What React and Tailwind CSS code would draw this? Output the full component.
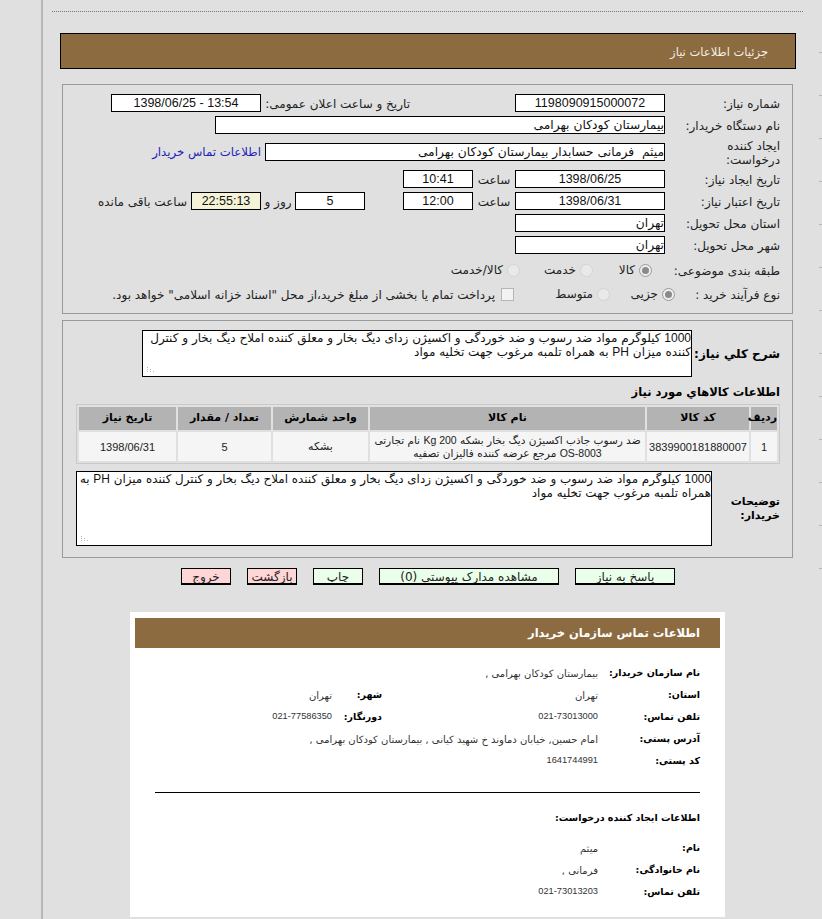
import React from "react";

const N = ({ children }) => <span className="font-['Liberation_Sans',sans-serif]">{children}</span>;

const Desc1 = () => (
  <>
    <N>1000</N> کیلوگرم مواد ضد رسوب و ضد خوردگی و اکسیژن زدای دیگ بخار و معلق کننده املاح دیگ بخار و کنترل کننده میزان <N>PH</N> به همراه تلمبه مرغوب جهت تخلیه مواد
  </>
);

function Box({ w, children, center, yellow, ltr }) {
  return (
    <div className={`${w} h-[18px] shrink-0 border border-black ${yellow ? "bg-[#f5f3d7]" : "bg-white"} ${center ? "text-center" : "text-right"} leading-[17px] text-[#111] whitespace-pre overflow-hidden ${ltr ? "text-[12.5px] font-['Liberation_Sans',sans-serif]" : "text-[12.25px]"}`}>
      {ltr ? <span dir="ltr">{children}</span> : children}
    </div>
  );
}

function Label({ children, w = "w-[115px]" }) {
  return <div className={`${w} shrink-0 pt-[1px] text-[12px] leading-[14px] text-[#222] whitespace-nowrap`}>{children}</div>;
}

function Txt({ className = "", children }) {
  return <div className={`shrink-0 pt-[1px] text-[12px] text-[#222] whitespace-nowrap ${className}`}>{children}</div>;
}

function Row({ children, className = "" }) {
  return <div className={`flex items-center h-[18px] ${className}`}>{children}</div>;
}

function Radio({ on }) {
  return (
    <span className={`w-[13px] h-[13px] shrink-0 rounded-full border flex items-center justify-center ${on ? "border-[#9a9a9a] bg-[#eeeeee]" : "border-[#d4d4d4] bg-[#e9e9e9]"}`}>
      {on && <span className="w-[7px] h-[7px] rounded-full bg-[#8a8a8a]" />}
    </span>
  );
}

function Btn({ w, pink, children }) {
  return (
    <div className={`${w} h-[17px] border border-black border-b-2 ${pink ? "bg-[#ffd6d6]" : "bg-[#eaffea]"} text-center text-[12px] leading-[17px] text-[#222] overflow-hidden`} dir="rtl">
      {children}
    </div>
  );
}

function Info({ label, value, label2, value2, num, num2 }) {
  const v = "text-[10px] text-[#333] whitespace-nowrap";
  const n = "text-[9.25px] text-[#333] whitespace-nowrap font-['Liberation_Sans',sans-serif]";
  return (
    <div className="flex items-center h-[22px]">
      <div className="w-[102px] shrink-0 text-[9.5px] font-bold text-black whitespace-nowrap">{label}</div>
      <div className={`${label2 ? "w-[216px]" : ""} shrink-0 ${num ? n : v}`}>{value}</div>
      {label2 && <div className="w-[50px] shrink-0 text-[9.5px] font-bold text-black">{label2}</div>}
      {label2 && <div className={`shrink-0 ${num2 ? n : v}`}>{value2}</div>}
    </div>
  );
}

function Grip() {
  return (
    <svg className="absolute left-[3px] bottom-[2px]" width="10" height="8" viewBox="0 0 10 8">
      <g fill="#b5b5b5">
        <rect x="1" y="5" width="1" height="1" /><rect x="1" y="3" width="1" height="1" /><rect x="1" y="1" width="1" height="1" />
        <rect x="4" y="5" width="1" height="1" /><rect x="4" y="3" width="1" height="1" />
        <rect x="7" y="5" width="1" height="1" />
      </g>
    </svg>
  );
}

const Th = ({ w, children }) => (
  <th className={`${w} h-[23px] p-0 bg-[#b3b3b3] text-[11px] font-bold text-black text-center whitespace-nowrap`}>{children}</th>
);
const Td = ({ children, num }) => (
  <td className={`h-[29px] p-0 bg-[#f5f5f5] leading-[14px] text-[#222] text-center ${num ? "text-[11px] font-['Liberation_Sans',sans-serif]" : "text-[11px]"}`}>{children}</td>
);

export default function App() {
  return (
    <div className="relative w-[822px] h-[919px] overflow-hidden bg-[#e0e0e0] font-['DejaVu_Sans',sans-serif]">
      <div className="absolute right-0 top-[10px] w-[3px] h-[570px] bg-[repeating-linear-gradient(to_bottom,transparent_0,transparent_42px,#b4b4b4_42px,#b4b4b4_43px)]" />
      <div className="ml-[41px] h-full border-l-2 border-[#b8b8b8]">
        <div className="pt-[11px]">
          <div className="ml-[9px] w-[751px] border-t border-dotted border-[#777]" />
        </div>

        <div dir="rtl" className="ml-[17px] mt-[21px] w-[736px] h-[36px] border border-black bg-[#8b6b3f] pr-[27px] text-[11.5px] leading-[36px] text-[#f4f0e8]">
          جزئیات اطلاعات نیاز
        </div>

        <div dir="rtl" className="ml-[19px] mt-[15px] w-[731px] h-[230px] border border-[#999] pt-[9px] pr-[12px]">
          <Row>
            <Label>شماره نیاز:</Label>
            <Box w="w-[150px]" center ltr>1198090915000072</Box>
            <Txt className="ms-[105px] w-[149px]">تاریخ و ساعت اعلان عمومی:</Txt>
            <Box w="w-[150px]" center ltr>1398/06/25 - 13:54</Box>
          </Row>
          <Row className="mt-[4px]">
            <Label>نام دستگاه خریدار:</Label>
            <Box w="w-[450px]">بیمارستان کودکان بهرامی</Box>
          </Row>
          <Row className="mt-[9px]">
            <Label>ایجاد کننده<br />درخواست:</Label>
            <Box w="w-[400px]">میثم  فرمانی حسابدار بیمارستان کودکان بهرامی</Box>
            <a className="ms-[4px] pt-[1px] text-[11.75px] text-[#2222bb] whitespace-nowrap">اطلاعات تماس خریدار</a>
          </Row>
          <Row className="mt-[9px]">
            <Label>تاریخ ایجاد نیاز:</Label>
            <Box w="w-[150px]" center ltr>1398/06/25</Box>
            <Txt className="w-[42px] text-center">ساعت</Txt>
            <Box w="w-[70px]" center ltr>10:41</Box>
          </Row>
          <Row className="mt-[4px]">
            <Label>تاریخ اعتبار نیاز:</Label>
            <Box w="w-[150px]" center ltr>1398/06/31</Box>
            <Txt className="w-[42px] text-center">ساعت</Txt>
            <Box w="w-[70px]" center ltr>12:00</Box>
            <div className="w-[38px] shrink-0" />
            <Box w="w-[70px]" center ltr>5</Box>
            <Txt className="w-[34px] text-center text-[10px]">روز و</Txt>
            <Box w="w-[70px]" center yellow ltr>22:55:13</Box>
            <Txt className="ms-[4px]">ساعت باقی مانده</Txt>
          </Row>
          <Row className="mt-[4px]">
            <Label>استان محل تحویل:</Label>
            <Box w="w-[150px]">تهران</Box>
          </Row>
          <Row className="mt-[4px]">
            <Label>شهر محل تحویل:</Label>
            <Box w="w-[150px]">تهران</Box>
          </Row>
          <Row className="mt-[7px]">
            <Label>طبقه بندی موضوعی:</Label>
            <div className="ms-[13px] w-[59px] shrink-0 flex items-center gap-[4px] text-[12px] text-[#222]"><Radio on />کالا</div>
            <div className="w-[73px] shrink-0 flex items-center gap-[4px] text-[12px] text-[#222]"><Radio />خدمت</div>
            <div className="flex items-center gap-[4px] text-[12px] text-[#222] whitespace-nowrap"><Radio />کالا/خدمت</div>
          </Row>
          <Row className="mt-[6px]">
            <Label w="w-[105px]">نوع فرآیند خرید :</Label>
            <div className="w-[65px] shrink-0 flex items-center gap-[4px] text-[12px] text-[#222]"><Radio on />جزیی</div>
            <div className="w-[96px] shrink-0 flex items-center gap-[4px] text-[12px] text-[#222]"><Radio />متوسط</div>
            <span className="w-[13px] h-[13px] shrink-0 border border-[#b5b5b5] bg-[#f2f2f2]" />
            <Txt className="ms-[6px] text-[12.25px]">پرداخت تمام یا بخشی از مبلغ خرید،از محل "اسناد خزانه اسلامی" خواهد بود.</Txt>
          </Row>
        </div>

        <div dir="rtl" className="ml-[19px] mt-[6px] w-[731px] h-[238px] border border-[#999] pt-[9px] pr-[12px]">
          <div className="flex items-center">
            <div className="w-[88px] shrink-0 text-[12px] font-bold text-black whitespace-nowrap">شرح کلي نياز:</div>
            <div className="relative w-[550px] h-[47px] shrink-0 border border-black bg-white text-[12px] leading-[14px] text-[#111] overflow-hidden">
              <Desc1 />
              <Grip />
            </div>
          </div>
          <div className="mt-[7px] h-[16px] text-[11.5px] leading-[16px] font-bold text-black">اطلاعات کالاهاي مورد نياز</div>
          <table className="mt-[4px] w-[704px] table-fixed border-separate border-spacing-[2px] border border-[#c9c9c9]">
            <thead>
              <tr>
                <Th w="w-[26px]">رديف</Th>
                <Th w="w-[102px]">کد کالا</Th>
                <Th w="w-[275px]">نام کالا</Th>
                <Th w="w-[95px]">واحد شمارش</Th>
                <Th w="w-[93px]">تعداد / مقدار</Th>
                <Th>تاریخ نیاز</Th>
              </tr>
            </thead>
            <tbody>
              <tr>
                <Td num>1</Td>
                <Td num>3839900181880007</Td>
                <Td>
                  <span className="text-[10.5px] leading-[13px] block whitespace-nowrap">ضد رسوب جاذب اکسیژن دیگ بخار بشکه <N>200 Kg</N> نام تجارتی<br /><N>OS-8003</N> مرجع عرضه کننده فالیزان تصفیه</span>
                </Td>
                <Td>بشکه</Td>
                <Td num>5</Td>
                <Td num>1398/06/31</Td>
              </tr>
            </tbody>
          </table>
          <div className="flex items-center mt-[7px]">
            <div className="w-[68px] shrink-0 text-[11px] leading-[14px] font-bold text-black">توضیحات<br />خریدار:</div>
            <div className="relative w-[636px] h-[75px] shrink-0 border border-black bg-white text-[11.9px] leading-[14px] text-[#111] overflow-hidden">
              <Desc1 />
              <Grip />
            </div>
          </div>
        </div>

        <div className="mt-[10px] ml-[138px] flex gap-[16px]">
          <Btn w="w-[50px]" pink>خروج</Btn>
          <Btn w="w-[50px]" pink>بازگشت</Btn>
          <Btn w="w-[50px]">چاپ</Btn>
          <Btn w="w-[180px]">مشاهده مدارک پیوستي (0)</Btn>
          <Btn w="w-[100px]">پاسخ به نیاز</Btn>
        </div>

        <div dir="rtl" className="ml-[87px] mt-[27px] w-[595px] h-[305px] bg-white pt-[6px] px-[5px]">
          <div className="h-[30px] bg-[#8b6b3f] pr-[20px] text-[11.5px] font-bold leading-[30px] text-white">اطلاعات تماس سازمان خریدار</div>
          <div className="mt-[14px] pr-[20px]">
            <Info label="نام سازمان خریدار:" value="بیمارستان کودکان بهرامی ," />
            <Info label="استان:" value="تهران" label2="شهر:" value2="تهران" />
            <Info label="تلفن تماس:" value="021-73013000" label2="دورنگار:" value2="021-77586350" num num2 />
            <Info label="آدرس پستی:" value="امام حسین, خیابان دماوند خ شهید کیانی , بیمارستان کودکان بهرامی ," />
            <Info label="کد پستی:" value="1641744991" num />
            <div className="mt-[20px] w-[545px] border-t border-black" />
            <div className="mt-[17px] h-[16px] text-[9.5px] leading-[16px] font-bold text-black">اطلاعات ایجاد کننده درخواست:</div>
            <div className="mt-[11px]">
              <Info label="نام:" value="میثم" />
              <Info label="نام خانوادگی:" value="فرمانی ," />
              <Info label="تلفن تماس:" value="021-73013203" num />
            </div>
          </div>
        </div>
      </div>
    </div>
  );
}
